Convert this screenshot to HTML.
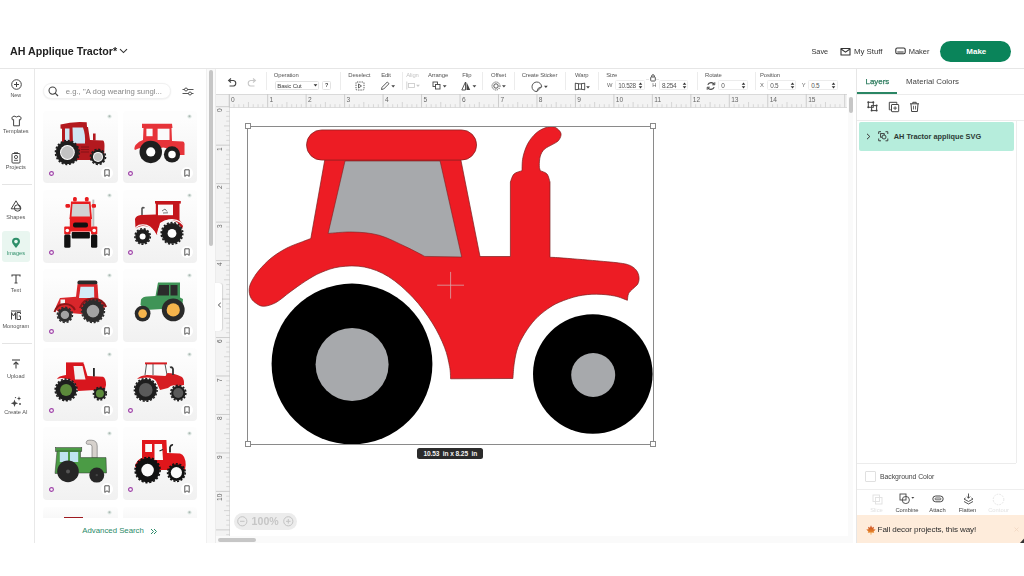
<!DOCTYPE html>
<html><head><meta charset="utf-8">
<style>
*{margin:0;padding:0;box-sizing:border-box}
html,body{width:1024px;height:576px;overflow:hidden;background:#fff;font-family:"Liberation Sans",sans-serif;color:#333}
.a{position:absolute}
.t{position:absolute;white-space:nowrap;line-height:1}
svg{position:absolute;overflow:visible}
</style></head><body><div style="position:absolute;left:0;top:0;width:1024px;height:576px;overflow:hidden;filter:blur(0.3px)">
<div class="t" style="left:10.00px;top:45.64px;font-size:10.7px;color:#222;font-weight:bold;">AH Applique Tractor*</div>
<svg style="left:119.00px;top:48.00px;" width="9" height="6" viewBox="0 0 9 6"><path d="M1 1.2 L4.5 4.6 L8 1.2" fill="none" stroke="#333" stroke-width="1.1"/></svg>
<div class="t" style="left:811.50px;top:48.00px;font-size:7.3px;color:#333;">Save</div>
<svg style="left:840.00px;top:46.50px;" width="11" height="9" viewBox="0 0 11 9"><path d="M1 1.5 H10 V8 H1 Z" fill="none" stroke="#333" stroke-width="1.1" stroke-linejoin="round"/><path d="M1 2 L5.5 5.2 L10 2" fill="none" stroke="#333" stroke-width="1.1"/></svg>
<div class="t" style="left:854.00px;top:47.74px;font-size:7.8px;color:#333;">My Stuff</div>
<svg style="left:894.50px;top:47.00px;" width="11" height="8" viewBox="0 0 11 8"><rect x="0.8" y="1" width="9.4" height="5.8" rx="1.5" fill="none" stroke="#333" stroke-width="1.1"/><path d="M2.3 5 H8.7" stroke="#333" stroke-width="1"/></svg>
<div class="t" style="left:908.70px;top:47.90px;font-size:7.5px;color:#333;">Maker</div>
<div class="a" style="left:940.00px;top:40.50px;width:71.00px;height:21.50px;background:#0a845a;border-radius:11px"></div>
<div class="t" style="left:966.30px;top:48.14px;font-size:8.0px;color:#fff;font-weight:bold;">Make</div>
<div class="a" style="left:0.00px;top:68.00px;width:1024.00px;height:1.00px;background:#e6e6e6;"></div>
<div class="a" style="left:34.00px;top:69.00px;width:1.00px;height:474.00px;background:#e8e8e8;"></div>
<svg style="left:10.50px;top:79.30px;" width="11" height="11" viewBox="0 0 11 11"><circle cx="5.5" cy="5.5" r="4.8" fill="none" stroke="#444" stroke-width="1"/><path d="M5.5 3 V8 M3 5.5 H8" stroke="#444" stroke-width="1"/></svg>
<div class="t" style="left:-34.20px;width:100px;text-align:center;top:92.59px;font-size:5.4px;color:#555;">New</div>
<svg style="left:10.50px;top:114.50px;" width="11" height="12" viewBox="0 0 11 12"><path d="M3 1 Q5.5 3 8 1 L10.2 2.6 L9.6 4.8 L8.4 4.6 V10.8 H2.6 V4.6 L1.4 4.8 L0.8 2.6 Z" fill="none" stroke="#444" stroke-width="1" stroke-linejoin="round"/></svg>
<div class="t" style="left:-34.20px;width:100px;text-align:center;top:129.19px;font-size:5.6px;color:#555;">Templates</div>
<svg style="left:11.00px;top:151.50px;" width="10" height="12" viewBox="0 0 10 12"><rect x="1" y="1.5" width="8" height="9.5" rx="1" fill="none" stroke="#444" stroke-width="1"/><circle cx="5" cy="5" r="1.6" fill="none" stroke="#444" stroke-width="0.9"/><path d="M3 8.3 H7" stroke="#444" stroke-width="0.9"/><path d="M3 0.6 H7" stroke="#444" stroke-width="0.8"/></svg>
<div class="t" style="left:-34.20px;width:100px;text-align:center;top:165.19px;font-size:5.6px;color:#555;">Projects</div>
<div class="a" style="left:2.00px;top:184.30px;width:29.50px;height:1.00px;background:#e4e4e4;"></div>
<svg style="left:10.00px;top:200.30px;" width="12" height="12" viewBox="0 0 12 12"><path d="M6 0.8 L10.8 8.8 H1.2 Z" fill="none" stroke="#444" stroke-width="1" stroke-linejoin="round"/><circle cx="7.6" cy="8" r="3.2" fill="none" stroke="#444" stroke-width="1"/></svg>
<div class="t" style="left:-34.20px;width:100px;text-align:center;top:215.39px;font-size:5.6px;color:#555;">Shapes</div>
<div class="a" style="left:1.70px;top:230.80px;width:28.50px;height:31.20px;background:#e9f6f0;border-radius:3px"></div>
<svg style="left:10.80px;top:236.60px;" width="10" height="12" viewBox="0 0 10 12"><path d="M5 11 C3.5 9 1 6.8 1 4.8 A4 4 0 0 1 9 4.8 C9 6.8 6.5 9 5 11 Z" fill="#2f8f6a"/><circle cx="5" cy="4.6" r="1.8" fill="#e9f6f0"/></svg>
<div class="t" style="left:-34.20px;width:100px;text-align:center;top:251.49px;font-size:5.6px;color:#2f8f6a;">Images</div>
<svg style="left:11.00px;top:273.80px;" width="10" height="10" viewBox="0 0 10 10"><path d="M1 2.4 V1 H9 V2.4 M5 1 V9 M3.5 9 H6.5" fill="none" stroke="#444" stroke-width="1.1"/></svg>
<div class="t" style="left:-34.20px;width:100px;text-align:center;top:288.39px;font-size:5.6px;color:#555;">Text</div>
<svg style="left:10.00px;top:310.20px;" width="12" height="10.5" viewBox="0 0 12 10.5"><path d="M1 1 H11" stroke="#444" stroke-width="1"/><path d="M1.5 9.5 V2.5 L3.5 6 L5.5 2.5 V9.5" fill="none" stroke="#444" stroke-width="1"/><path d="M10.5 4 V2.5 H7 V9.5 H10.5 V6 H8.8" fill="none" stroke="#444" stroke-width="1"/></svg>
<div class="t" style="left:-34.20px;width:100px;text-align:center;top:324.29px;font-size:5.6px;color:#555;">Monogram</div>
<div class="a" style="left:2.00px;top:343.00px;width:29.50px;height:1.00px;background:#e4e4e4;"></div>
<svg style="left:11.00px;top:359.20px;" width="10" height="10" viewBox="0 0 10 10"><path d="M1 1 H9" stroke="#444" stroke-width="1.1"/><path d="M5 9.5 V3.2 M2.6 5.5 L5 3.1 L7.4 5.5" fill="none" stroke="#444" stroke-width="1.1"/></svg>
<div class="t" style="left:-34.20px;width:100px;text-align:center;top:373.69px;font-size:5.6px;color:#555;">Upload</div>
<svg style="left:10.00px;top:396.30px;" width="12" height="11" viewBox="0 0 12 11"><path d="M4.5 3.6 L5.5 6.3 L8.2 7.3 L5.5 8.3 L4.5 11 L3.5 8.3 L0.8 7.3 L3.5 6.3 Z" fill="#444"/><path d="M9 0.3 L9.6 1.9 L11.2 2.5 L9.6 3.1 L9 4.7 L8.4 3.1 L6.8 2.5 L8.4 1.9 Z" fill="#444"/><circle cx="10" cy="8" r="0.9" fill="#444"/><circle cx="5.5" cy="1.6" r="0.7" fill="#444"/></svg>
<div class="t" style="left:-34.20px;width:100px;text-align:center;top:409.99px;font-size:5.6px;color:#555;">Create AI</div>
<div class="a" style="left:43.40px;top:83.00px;width:127.20px;height:16.20px;background:#fff;border:1px solid #f1f1f1;border-radius:8px;box-shadow:0 0.5px 1.5px rgba(0,0,0,0.08)"></div>
<svg style="left:48.30px;top:86.30px;" width="11" height="11" viewBox="0 0 11 11"><circle cx="4.6" cy="4.6" r="3.6" fill="none" stroke="#444" stroke-width="1.1"/><path d="M7.2 7.2 L10 10" stroke="#444" stroke-width="1.2"/></svg>
<div class="t" style="left:65.70px;top:87.87px;font-size:7.75px;color:#888;">e.g., "A dog wearing sungl...</div>
<svg style="left:182.00px;top:86.50px;" width="12" height="9" viewBox="0 0 12 9"><path d="M0.5 2.5 H11.5 M0.5 6.5 H11.5" stroke="#444" stroke-width="0.9"/><circle cx="4" cy="2.5" r="1.5" fill="#fff" stroke="#444" stroke-width="0.9"/><circle cx="8" cy="6.5" r="1.5" fill="#fff" stroke="#444" stroke-width="0.9"/></svg>
<div class="a" style="left:43.40px;top:110.60px;width:74.20px;height:72.80px;background:linear-gradient(#fdfdfd 10%,#f1f1f1);border-radius:4px"></div>
<svg style="left:107.10px;top:114.10px;" width="5" height="5" viewBox="0 0 5 5"><circle cx="2.5" cy="2.5" r="2.1" fill="#dfe8e4"/><circle cx="2.5" cy="2.3" r="1" fill="#aab8b2"/></svg>
<svg style="left:48.70px;top:170.60px;" width="5" height="5" viewBox="0 0 5 5"><circle cx="2.5" cy="2.5" r="1.9" fill="#fbf5fb" stroke="#9c3fa6" stroke-width="1.15"/></svg>
<svg style="left:101.10px;top:166.60px;" width="12" height="12" viewBox="0 0 12 12"><circle cx="6" cy="6" r="6" fill="#fff"/><path d="M3.8 2.8 H8.2 V9.4 L6 7.8 L3.8 9.4 Z" fill="none" stroke="#444" stroke-width="0.9" stroke-linejoin="round"/></svg>
<div class="a" style="left:122.80px;top:110.60px;width:74.20px;height:72.80px;background:linear-gradient(#fdfdfd 10%,#f1f1f1);border-radius:4px"></div>
<svg style="left:186.50px;top:114.10px;" width="5" height="5" viewBox="0 0 5 5"><circle cx="2.5" cy="2.5" r="2.1" fill="#dfe8e4"/><circle cx="2.5" cy="2.3" r="1" fill="#aab8b2"/></svg>
<svg style="left:128.10px;top:170.60px;" width="5" height="5" viewBox="0 0 5 5"><circle cx="2.5" cy="2.5" r="1.9" fill="#fbf5fb" stroke="#9c3fa6" stroke-width="1.15"/></svg>
<svg style="left:180.50px;top:166.60px;" width="12" height="12" viewBox="0 0 12 12"><circle cx="6" cy="6" r="6" fill="#fff"/><path d="M3.8 2.8 H8.2 V9.4 L6 7.8 L3.8 9.4 Z" fill="none" stroke="#444" stroke-width="0.9" stroke-linejoin="round"/></svg>
<div class="a" style="left:43.40px;top:189.80px;width:74.20px;height:72.80px;background:linear-gradient(#fdfdfd 10%,#f1f1f1);border-radius:4px"></div>
<svg style="left:107.10px;top:193.30px;" width="5" height="5" viewBox="0 0 5 5"><circle cx="2.5" cy="2.5" r="2.1" fill="#dfe8e4"/><circle cx="2.5" cy="2.3" r="1" fill="#aab8b2"/></svg>
<svg style="left:48.70px;top:249.80px;" width="5" height="5" viewBox="0 0 5 5"><circle cx="2.5" cy="2.5" r="1.9" fill="#fbf5fb" stroke="#9c3fa6" stroke-width="1.15"/></svg>
<svg style="left:101.10px;top:245.80px;" width="12" height="12" viewBox="0 0 12 12"><circle cx="6" cy="6" r="6" fill="#fff"/><path d="M3.8 2.8 H8.2 V9.4 L6 7.8 L3.8 9.4 Z" fill="none" stroke="#444" stroke-width="0.9" stroke-linejoin="round"/></svg>
<div class="a" style="left:122.80px;top:189.80px;width:74.20px;height:72.80px;background:linear-gradient(#fdfdfd 10%,#f1f1f1);border-radius:4px"></div>
<svg style="left:186.50px;top:193.30px;" width="5" height="5" viewBox="0 0 5 5"><circle cx="2.5" cy="2.5" r="2.1" fill="#dfe8e4"/><circle cx="2.5" cy="2.3" r="1" fill="#aab8b2"/></svg>
<svg style="left:128.10px;top:249.80px;" width="5" height="5" viewBox="0 0 5 5"><circle cx="2.5" cy="2.5" r="1.9" fill="#fbf5fb" stroke="#9c3fa6" stroke-width="1.15"/></svg>
<svg style="left:180.50px;top:245.80px;" width="12" height="12" viewBox="0 0 12 12"><circle cx="6" cy="6" r="6" fill="#fff"/><path d="M3.8 2.8 H8.2 V9.4 L6 7.8 L3.8 9.4 Z" fill="none" stroke="#444" stroke-width="0.9" stroke-linejoin="round"/></svg>
<div class="a" style="left:43.40px;top:269.00px;width:74.20px;height:72.80px;background:linear-gradient(#fdfdfd 10%,#f1f1f1);border-radius:4px"></div>
<svg style="left:107.10px;top:272.50px;" width="5" height="5" viewBox="0 0 5 5"><circle cx="2.5" cy="2.5" r="2.1" fill="#dfe8e4"/><circle cx="2.5" cy="2.3" r="1" fill="#aab8b2"/></svg>
<svg style="left:48.70px;top:329.00px;" width="5" height="5" viewBox="0 0 5 5"><circle cx="2.5" cy="2.5" r="1.9" fill="#fbf5fb" stroke="#9c3fa6" stroke-width="1.15"/></svg>
<svg style="left:101.10px;top:325.00px;" width="12" height="12" viewBox="0 0 12 12"><circle cx="6" cy="6" r="6" fill="#fff"/><path d="M3.8 2.8 H8.2 V9.4 L6 7.8 L3.8 9.4 Z" fill="none" stroke="#444" stroke-width="0.9" stroke-linejoin="round"/></svg>
<div class="a" style="left:122.80px;top:269.00px;width:74.20px;height:72.80px;background:linear-gradient(#fdfdfd 10%,#f1f1f1);border-radius:4px"></div>
<svg style="left:186.50px;top:272.50px;" width="5" height="5" viewBox="0 0 5 5"><circle cx="2.5" cy="2.5" r="2.1" fill="#dfe8e4"/><circle cx="2.5" cy="2.3" r="1" fill="#aab8b2"/></svg>
<svg style="left:180.50px;top:325.00px;" width="12" height="12" viewBox="0 0 12 12"><circle cx="6" cy="6" r="6" fill="#fff"/><path d="M3.8 2.8 H8.2 V9.4 L6 7.8 L3.8 9.4 Z" fill="none" stroke="#444" stroke-width="0.9" stroke-linejoin="round"/></svg>
<div class="a" style="left:43.40px;top:348.20px;width:74.20px;height:72.80px;background:linear-gradient(#fdfdfd 10%,#f1f1f1);border-radius:4px"></div>
<svg style="left:107.10px;top:351.70px;" width="5" height="5" viewBox="0 0 5 5"><circle cx="2.5" cy="2.5" r="2.1" fill="#dfe8e4"/><circle cx="2.5" cy="2.3" r="1" fill="#aab8b2"/></svg>
<svg style="left:48.70px;top:408.20px;" width="5" height="5" viewBox="0 0 5 5"><circle cx="2.5" cy="2.5" r="1.9" fill="#fbf5fb" stroke="#9c3fa6" stroke-width="1.15"/></svg>
<svg style="left:101.10px;top:404.20px;" width="12" height="12" viewBox="0 0 12 12"><circle cx="6" cy="6" r="6" fill="#fff"/><path d="M3.8 2.8 H8.2 V9.4 L6 7.8 L3.8 9.4 Z" fill="none" stroke="#444" stroke-width="0.9" stroke-linejoin="round"/></svg>
<div class="a" style="left:122.80px;top:348.20px;width:74.20px;height:72.80px;background:linear-gradient(#fdfdfd 10%,#f1f1f1);border-radius:4px"></div>
<svg style="left:186.50px;top:351.70px;" width="5" height="5" viewBox="0 0 5 5"><circle cx="2.5" cy="2.5" r="2.1" fill="#dfe8e4"/><circle cx="2.5" cy="2.3" r="1" fill="#aab8b2"/></svg>
<svg style="left:128.10px;top:408.20px;" width="5" height="5" viewBox="0 0 5 5"><circle cx="2.5" cy="2.5" r="1.9" fill="#fbf5fb" stroke="#9c3fa6" stroke-width="1.15"/></svg>
<svg style="left:180.50px;top:404.20px;" width="12" height="12" viewBox="0 0 12 12"><circle cx="6" cy="6" r="6" fill="#fff"/><path d="M3.8 2.8 H8.2 V9.4 L6 7.8 L3.8 9.4 Z" fill="none" stroke="#444" stroke-width="0.9" stroke-linejoin="round"/></svg>
<div class="a" style="left:43.40px;top:427.40px;width:74.20px;height:72.80px;background:linear-gradient(#fdfdfd 10%,#f1f1f1);border-radius:4px"></div>
<svg style="left:107.10px;top:430.90px;" width="5" height="5" viewBox="0 0 5 5"><circle cx="2.5" cy="2.5" r="2.1" fill="#dfe8e4"/><circle cx="2.5" cy="2.3" r="1" fill="#aab8b2"/></svg>
<svg style="left:48.70px;top:487.40px;" width="5" height="5" viewBox="0 0 5 5"><circle cx="2.5" cy="2.5" r="1.9" fill="#fbf5fb" stroke="#9c3fa6" stroke-width="1.15"/></svg>
<svg style="left:101.10px;top:483.40px;" width="12" height="12" viewBox="0 0 12 12"><circle cx="6" cy="6" r="6" fill="#fff"/><path d="M3.8 2.8 H8.2 V9.4 L6 7.8 L3.8 9.4 Z" fill="none" stroke="#444" stroke-width="0.9" stroke-linejoin="round"/></svg>
<div class="a" style="left:122.80px;top:427.40px;width:74.20px;height:72.80px;background:linear-gradient(#fdfdfd 10%,#f1f1f1);border-radius:4px"></div>
<svg style="left:186.50px;top:430.90px;" width="5" height="5" viewBox="0 0 5 5"><circle cx="2.5" cy="2.5" r="2.1" fill="#dfe8e4"/><circle cx="2.5" cy="2.3" r="1" fill="#aab8b2"/></svg>
<svg style="left:128.10px;top:487.40px;" width="5" height="5" viewBox="0 0 5 5"><circle cx="2.5" cy="2.5" r="1.9" fill="#fbf5fb" stroke="#9c3fa6" stroke-width="1.15"/></svg>
<svg style="left:180.50px;top:483.40px;" width="12" height="12" viewBox="0 0 12 12"><circle cx="6" cy="6" r="6" fill="#fff"/><path d="M3.8 2.8 H8.2 V9.4 L6 7.8 L3.8 9.4 Z" fill="none" stroke="#444" stroke-width="0.9" stroke-linejoin="round"/></svg>
<div class="a" style="left:43.40px;top:506.60px;width:74.20px;height:11.90px;background:linear-gradient(#fdfdfd,#f8f8f8);border-radius:4px 4px 0 0"></div>
<svg style="left:107.10px;top:510.10px;" width="5" height="5" viewBox="0 0 5 5"><circle cx="2.5" cy="2.5" r="2.1" fill="#dfe8e4"/><circle cx="2.5" cy="2.3" r="1" fill="#aab8b2"/></svg>
<div class="a" style="left:122.80px;top:506.60px;width:74.20px;height:11.90px;background:linear-gradient(#fdfdfd,#f8f8f8);border-radius:4px 4px 0 0"></div>
<svg style="left:186.50px;top:510.10px;" width="5" height="5" viewBox="0 0 5 5"><circle cx="2.5" cy="2.5" r="2.1" fill="#dfe8e4"/><circle cx="2.5" cy="2.3" r="1" fill="#aab8b2"/></svg>
<svg style="left:43.00px;top:110.00px;" width="80" height="72" viewBox="0 0 80 72"><path d="M17.5 14.4 Q30 11 43.7 12.2 L44 17 L43 18.5 L20 19 L17.5 18.5 Z" fill="#b3191f"/><path d="M19 17 H45 L47 30 L60 30.5 Q61.5 31 61.5 36 L61 50 H26 V35 L19 35 Z" fill="#b3191f"/><path d="M22 18.5 H26.5 V31 H22 Z" fill="#cfe5f3"/><path d="M29.5 17.5 H40 Q42.5 24 42 33.5 H30 Z" fill="#cfe5f3"/><rect x="50" y="23.5" width="2.6" height="7" fill="#b3191f"/><path d="M38 37 H46 M38 39.5 H46 M38 42 H46" stroke="#7a1014" stroke-width="0.8"/><circle cx="24.4" cy="42.5" r="11.9" fill="none" stroke="#1e1e1e" stroke-width="1.6" stroke-dasharray="2.06 1.68"/><circle cx="24.4" cy="42.5" r="11.5" fill="#1e1e1e"/><circle cx="24.4" cy="42.5" r="7.4" fill="#fff"/><circle cx="24.4" cy="42.5" r="6.4" fill="#c2c2c2"/><circle cx="55" cy="46.9" r="7.5" fill="none" stroke="#1e1e1e" stroke-width="1.6" stroke-dasharray="2.16 1.77"/><circle cx="55" cy="46.9" r="7.1" fill="#1e1e1e"/><circle cx="55" cy="46.9" r="5" fill="#fff"/><circle cx="55" cy="46.9" r="4" fill="#c2c2c2"/></svg>
<svg style="left:122.00px;top:110.00px;" width="80" height="72" viewBox="0 0 80 72"><path d="M20 13.8 H50 L50.5 18 H49.5 L50 31 L61 31.5 Q63 32 62.5 36 V45 H52 Q43 33 35 40 H25 Q20 36 13 40 Q11.5 39 13.5 35 Q17 31 21 30 L21.5 18 H20 Z" fill="#e63339"/><rect x="24.4" y="18.7" width="6.2" height="7.5" fill="#fafafa"/><path d="M35.6 18.7 H47.5 V30 H35.6 Z" fill="#fafafa"/><circle cx="28.75" cy="41.9" r="11.25" fill="#1e1e1e"/><circle cx="28.75" cy="41.9" r="4.6" fill="#fff"/><circle cx="50" cy="44.4" r="8.1" fill="#1e1e1e"/><circle cx="50" cy="44.4" r="3.75" fill="#fff"/></svg>
<svg style="left:43.00px;top:189.20px;" width="80" height="72" viewBox="0 0 80 72"><rect x="49.4" y="10.6" width="1.9" height="27" fill="#bdbdbd"/><rect x="30" y="8" width="3.8" height="4.5" rx="1.5" fill="#e81c1f"/><rect x="41.9" y="8" width="3.8" height="4.5" rx="1.5" fill="#e81c1f"/><rect x="22.5" y="15" width="4.5" height="3.7" rx="1.2" fill="#e81c1f"/><rect x="48.7" y="15" width="4.3" height="3.7" rx="1.2" fill="#e81c1f"/><path d="M28 12.5 H47.5 L49 30 H26.5 Z" fill="#e81c1f"/><path d="M29.5 15 H46 L47 27.5 H28.5 Z" fill="#d2d2d2"/><rect x="26.8" y="28.5" width="21.5" height="14" fill="#e81c1f"/><rect x="30" y="33.5" width="15" height="5" rx="2" fill="#111"/><rect x="21.2" y="37.5" width="6.3" height="8" rx="1" fill="#e81c1f"/><rect x="48" y="37.5" width="6.3" height="8" rx="1" fill="#e81c1f"/><circle cx="24.3" cy="41.5" r="1.8" fill="#fff"/><circle cx="51.2" cy="41.5" r="1.8" fill="#fff"/><rect x="28.7" y="43" width="18.2" height="6.5" rx="1" fill="#111"/><rect x="21.2" y="45.6" width="6.3" height="13.2" rx="1.5" fill="#111"/><rect x="48" y="45.6" width="6.3" height="13.2" rx="1.5" fill="#111"/></svg>
<svg style="left:122.00px;top:189.20px;" width="80" height="72" viewBox="0 0 80 72"><rect x="33" y="12" width="25.8" height="2.6" fill="#c4161c"/><path d="M33.8 14 H57.5 V31 L61.5 36 L60 40 L55 33 Q46 28 38 34 L35 46 Q30 36 20 37 Q15 38 13.5 40 L13 30 Q14 26.5 19 26 L33.8 25.5 Z" fill="#c4161c"/><path d="M36 15.6 H51 V26.2 H36 Z" fill="#fafafa"/><path d="M40 22 L43 20 L45 22.5 M41 24 L46 23.8" stroke="#555" stroke-width="0.8" fill="none"/><path d="M20 26 V19.5 Q20.5 18 22.5 19" stroke="#555" stroke-width="1.6" fill="none"/><path d="M10.5 45 Q13 35.5 21 35.8 Q29 36 32.5 44" stroke="#f7f7f7" stroke-width="1.2" fill="none"/><path d="M35.5 45 Q38 31 50 30.6 Q60 31 63.5 40" stroke="#f7f7f7" stroke-width="1.2" fill="none"/><circle cx="20.6" cy="47.5" r="7.700000000000001" fill="none" stroke="#1e1e1e" stroke-width="1.6" stroke-dasharray="2.05 1.67"/><circle cx="20.6" cy="47.5" r="7.300000000000001" fill="#1e1e1e"/><circle cx="20.6" cy="47.5" r="3" fill="#fff"/><circle cx="50" cy="44.4" r="10.8" fill="none" stroke="#1e1e1e" stroke-width="1.6" stroke-dasharray="2.07 1.70"/><circle cx="50" cy="44.4" r="10.4" fill="#1e1e1e"/><circle cx="50" cy="44.4" r="4.4" fill="#fff"/></svg>
<svg style="left:43.00px;top:268.40px;" width="80" height="72" viewBox="0 0 80 72"><rect x="34.4" y="12.5" width="20" height="4.4" rx="2" fill="#2a2a2a"/><path d="M34.5 16.2 H54.5 L55.5 32 L62 36 L61 42 L38 46 L16 44 Q12 42 13 38.5 L17 30 L33 28.8 Z" fill="#d9262b"/><path d="M37.5 18.8 H51 L51.3 30 H36 Z" fill="#d3ebf7"/><path d="M17.5 31.5 H22 V36.5 H17.5 Z" fill="#f4f4f4"/><path d="M11.5 44 Q14 36 22 36 Q29 36 32 42" stroke="#8e1518" stroke-width="2" fill="none"/><path d="M37 40 Q40 31 50 30.5 Q60 31 63 39" stroke="#8e1518" stroke-width="2.2" fill="none"/><circle cx="50" cy="43.1" r="11.4" fill="none" stroke="#2d2d2d" stroke-width="1.6" stroke-dasharray="2.07 1.70"/><circle cx="50" cy="43.1" r="11" fill="#2d2d2d"/><circle cx="50" cy="43.1" r="6.3" fill="#a3a3a3"/><circle cx="21.9" cy="46.9" r="7.5" fill="none" stroke="#2d2d2d" stroke-width="1.6" stroke-dasharray="2.16 1.77"/><circle cx="21.9" cy="46.9" r="7.1" fill="#2d2d2d"/><circle cx="21.9" cy="46.9" r="4.2" fill="#a3a3a3"/></svg>
<svg style="left:122.00px;top:268.40px;" width="80" height="72" viewBox="0 0 80 72"><path d="M36 14.4 H58 V29.5 L61 31 L60 41 H40 L24 42 L18.5 37 L19 31.5 Q21 28.5 25 28.4 L33.5 28 Z" fill="#3f9457"/><path d="M37 17 H47 V27.5 H35 Z" fill="#2b2b2b"/><path d="M48.5 17 H55.5 V27.5 H48.5 Z" fill="#2b2b2b"/><circle cx="51.25" cy="41.9" r="11.4" fill="#2a2a2a"/><circle cx="51.25" cy="41.9" r="6.6" fill="#f6b44c"/><circle cx="20.6" cy="45.6" r="7.9" fill="#2a2a2a"/><circle cx="20.6" cy="45.6" r="4.3" fill="#f6b44c"/></svg>
<svg style="left:43.00px;top:347.60px;" width="80" height="72" viewBox="0 0 80 72"><rect x="23" y="14.4" width="17.6" height="2.6" fill="#d8161e"/><path d="M23 16 H41 L44.5 28 L60 28.8 Q63 30 63 37 L62 41 L52 42 L35 43 L32 36 Q27 30 18 30 L14 31 Q15 28 23 27 Z" fill="#d8161e"/><path d="M30.5 18 H39.5 L42.5 31.5 H32 Z" fill="#f2f2f2"/><rect x="50" y="20" width="1.8" height="8.5" fill="#222"/><circle cx="23.1" cy="41.9" r="10.9" fill="none" stroke="#1e1e1e" stroke-width="1.6" stroke-dasharray="2.09 1.71"/><circle cx="23.1" cy="41.9" r="10.5" fill="#1e1e1e"/><circle cx="23.1" cy="41.9" r="6" fill="#5c8a3b"/><circle cx="56.9" cy="45.6" r="6.4" fill="none" stroke="#1e1e1e" stroke-width="1.6" stroke-dasharray="2.01 1.65"/><circle cx="56.9" cy="45.6" r="6" fill="#1e1e1e"/><circle cx="56.9" cy="45.6" r="4" fill="#5c8a3b"/></svg>
<svg style="left:122.00px;top:347.60px;" width="80" height="72" viewBox="0 0 80 72"><rect x="23" y="14.4" width="22" height="2" fill="#d61d22"/><path d="M24.5 16 L23 27 M31 16 V27 M43 16 L45 27" stroke="#444" stroke-width="0.9"/><path d="M15 31 Q18 27.5 25 27 L43.5 28 L45.5 25 Q52 25 60 29 Q62.5 31.5 62 37 L55 38 Q50 36 46 40 L38 42 L34 33 Q30 28 20 30 Z" fill="#d61d22"/><path d="M48 19.5 Q50 18.5 51 21 V27" stroke="#333" stroke-width="1.8" fill="none"/><circle cx="23.75" cy="41.9" r="11.3" fill="none" stroke="#1e1e1e" stroke-width="1.6" stroke-dasharray="2.06 1.68"/><circle cx="23.75" cy="41.9" r="10.9" fill="#1e1e1e"/><circle cx="23.75" cy="41.9" r="6.8" fill="#5a5a5a"/><circle cx="56.25" cy="45" r="7.6" fill="none" stroke="#1e1e1e" stroke-width="1.6" stroke-dasharray="2.02 1.65"/><circle cx="56.25" cy="45" r="7.199999999999999" fill="#1e1e1e"/><circle cx="56.25" cy="45" r="5" fill="#5a5a5a"/></svg>
<svg style="left:43.00px;top:426.80px;" width="80" height="72" viewBox="0 0 80 72"><path d="M49 31 V19.5 Q49 17.3 46.5 17.3 H44.5 Q43 17.3 43.2 15.3 Q43.5 13.2 46 13.2 H48.5 Q54 13.3 54.2 19 V31 Z" fill="#d6d1cc" stroke="#666" stroke-width="0.6"/><rect x="12.5" y="20.6" width="26.3" height="3.8" fill="#4b9b45" stroke="#333" stroke-width="0.5"/><path d="M14 24 H37.5 V30.6 H63 L63.5 46 H36 L12 46.5 Z" fill="#4b9b45" stroke="#333" stroke-width="0.5"/><rect x="16.8" y="25" width="8.2" height="10" fill="#bfe3f2"/><rect x="27" y="25" width="8.2" height="10" fill="#bfe3f2"/><circle cx="25" cy="44.4" r="10.8" fill="#262626"/><circle cx="25" cy="44.4" r="2" fill="#555"/><circle cx="53.75" cy="48.1" r="7.5" fill="#262626"/><circle cx="53.75" cy="48.1" r="1.2" fill="#444"/></svg>
<svg style="left:122.00px;top:426.80px;" width="80" height="72" viewBox="0 0 80 72"><path d="M20 13 H44.4 L45 26 L58 26.5 Q63.5 28 63.7 38 L63 43 H40 L30 44 L13 40 Q14 33 20 31 Z" fill="#e0161b"/><rect x="23.2" y="17" width="6.8" height="8" fill="#fafafa"/><path d="M32.5 17 H40 L41 33 H32.5 Z" fill="#fafafa"/><path d="M48 20 V25.5 M48 20 Q49 17.5 51 18" stroke="#222" stroke-width="1.8" fill="none"/><path d="M37.5 24 L41 22.5" stroke="#222" stroke-width="1.2"/><circle cx="25.6" cy="43.1" r="12.5" fill="none" stroke="#111" stroke-width="1.6" stroke-dasharray="2.16 1.77"/><circle cx="25.6" cy="43.1" r="12.1" fill="#111"/><circle cx="25.6" cy="43.1" r="6.3" fill="#fafafa"/><circle cx="54.4" cy="45.6" r="8.8" fill="none" stroke="#111" stroke-width="1.6" stroke-dasharray="2.03 1.66"/><circle cx="54.4" cy="45.6" r="8.4" fill="#111"/><circle cx="54.4" cy="45.6" r="5.6" fill="#fafafa"/></svg>
<div class="a" style="left:63.60px;top:516.80px;width:19.40px;height:1.60px;background:#9e1a20;"></div>
<div class="a" style="left:35.00px;top:518.50px;width:171.00px;height:24.50px;background:#fff;"></div>
<div class="t" style="left:82.30px;top:526.84px;font-size:7.8px;color:#2a8a68;">Advanced Search</div>
<svg style="left:149.50px;top:527.50px;" width="7" height="7" viewBox="0 0 7 7"><path d="M1 1 L3.5 3.5 L1 6 M4 1 L6.5 3.5 L4 6" fill="none" stroke="#2a8a68" stroke-width="1"/></svg>
<div class="a" style="left:205.80px;top:69.00px;width:1.00px;height:474.00px;background:#f0f0f0;"></div>
<div class="a" style="left:207.00px;top:69.00px;width:9.00px;height:474.00px;background:#fafafa;"></div>
<div class="a" style="left:209.00px;top:70.00px;width:4.00px;height:176.00px;background:#c6c6c6;border-radius:2px"></div>
<svg style="left:225.50px;top:77.00px;" width="12" height="10" viewBox="0 0 12 10"><path d="M3.2 3.5 H7.5 A2.8 2.8 0 0 1 7.5 9 H3.5" fill="none" stroke="#444" stroke-width="1.1"/><path d="M5 1.5 L2.6 3.5 L5 5.5" fill="none" stroke="#444" stroke-width="1.1"/></svg>
<svg style="left:245.50px;top:77.00px;" width="12" height="10" viewBox="0 0 12 10"><path d="M8.8 3.5 H4.5 A2.8 2.8 0 0 0 4.5 9 H8.5" fill="none" stroke="#c8c8c8" stroke-width="1.1"/><path d="M7 1.5 L9.4 3.5 L7 5.5" fill="none" stroke="#c8c8c8" stroke-width="1.1"/></svg>
<div class="a" style="left:265.60px;top:72.00px;width:1.00px;height:18.00px;background:#ececec;"></div>
<div class="t" style="left:273.80px;top:73.13px;font-size:5.9px;color:#555;letter-spacing:-0.12px">Operation</div>
<div class="a" style="left:274.50px;top:80.70px;width:44.20px;height:9.20px;background:#fff;border:1px solid #e2e2e2;border-radius:1.5px"></div>
<div class="t" style="left:277.30px;top:82.73px;font-size:6.1px;color:#444;letter-spacing:-0.2px">Basic Cut</div>
<svg style="left:313.00px;top:83.50px;" width="5" height="4" viewBox="0 0 5 4"><path d="M0.60 0.20 H4.40 L2.50 2.50 Z" fill="#333"/></svg>
<div class="a" style="left:322.00px;top:80.70px;width:9.20px;height:9.20px;background:#fff;border:1px solid #e2e2e2;border-radius:1.5px"></div>
<div class="t" style="left:276.60px;width:100px;text-align:center;top:82.64px;font-size:5.5px;color:#444;font-weight:bold;">?</div>
<div class="a" style="left:339.70px;top:72.00px;width:1.00px;height:18.00px;background:#ececec;"></div>
<div class="t" style="left:309.30px;width:100px;text-align:center;top:73.13px;font-size:5.9px;color:#555;letter-spacing:-0.12px">Deselect</div>
<svg style="left:354.50px;top:81.00px;" width="10" height="10" viewBox="0 0 10 10"><rect x="1" y="1" width="8" height="8" rx="1" fill="none" stroke="#444" stroke-width="0.9" stroke-dasharray="1.3 1"/><path d="M3.5 3 V7 M3.5 3 L6.5 5 L3.5 7" fill="none" stroke="#444" stroke-width="0.8"/></svg>
<div class="t" style="left:336.00px;width:100px;text-align:center;top:73.13px;font-size:5.9px;color:#555;letter-spacing:-0.12px">Edit</div>
<svg style="left:379.50px;top:81.20px;" width="16" height="10" viewBox="0 0 16 10"><path d="M1.5 8.5 L2 6.3 L7.3 1 L9 2.7 L3.7 8 Z" fill="none" stroke="#444" stroke-width="0.9" stroke-linejoin="round"/><path d="M11.30 4.20 H15.10 L13.20 6.50 Z" fill="#444"/></svg>
<div class="a" style="left:401.70px;top:72.00px;width:1.00px;height:18.00px;background:#ececec;"></div>
<div class="t" style="left:362.50px;width:100px;text-align:center;top:73.13px;font-size:5.9px;color:#c4c4c4;letter-spacing:-0.12px">Align</div>
<svg style="left:406.00px;top:81.00px;" width="14" height="9" viewBox="0 0 14 9"><path d="M0.8 0.5 V8.5" stroke="#c8c8c8" stroke-width="0.8"/><rect x="2.5" y="2.5" width="6" height="4" fill="none" stroke="#c8c8c8" stroke-width="0.8"/><path d="M10.10 3.70 H13.90 L12.00 6.00 Z" fill="#c8c8c8"/></svg>
<div class="t" style="left:388.00px;width:100px;text-align:center;top:73.13px;font-size:5.9px;color:#555;letter-spacing:-0.12px">Arrange</div>
<svg style="left:431.50px;top:81.20px;" width="16" height="10" viewBox="0 0 16 10"><rect x="1" y="1" width="4.5" height="4.5" fill="none" stroke="#444" stroke-width="0.9"/><rect x="3.5" y="3.5" width="4.5" height="4.5" fill="#fff" stroke="#444" stroke-width="0.9"/><path d="M10.80 4.20 H14.60 L12.70 6.50 Z" fill="#444"/></svg>
<div class="t" style="left:416.80px;width:100px;text-align:center;top:73.13px;font-size:5.9px;color:#555;letter-spacing:-0.12px">Flip</div>
<svg style="left:460.50px;top:81.20px;" width="16" height="10" viewBox="0 0 16 10"><path d="M4.5 1 L0.8 9 H4.5 Z" fill="none" stroke="#444" stroke-width="0.9" stroke-linejoin="round"/><path d="M5.5 1 L9.2 9 H5.5 Z" fill="#444"/><path d="M11.50 4.20 H15.30 L13.40 6.50 Z" fill="#444"/></svg>
<div class="a" style="left:482.40px;top:72.00px;width:1.00px;height:18.00px;background:#ececec;"></div>
<div class="t" style="left:448.50px;width:100px;text-align:center;top:73.13px;font-size:5.9px;color:#555;letter-spacing:-0.12px">Offset</div>
<svg style="left:490.50px;top:81.20px;" width="16" height="10" viewBox="0 0 16 10"><circle cx="5" cy="5" r="2.2" fill="none" stroke="#444" stroke-width="0.9"/><circle cx="5" cy="5" r="4" fill="none" stroke="#444" stroke-width="0.9" stroke-dasharray="1.2 0.9"/><path d="M11.00 4.20 H14.80 L12.90 6.50 Z" fill="#444"/></svg>
<div class="a" style="left:513.60px;top:72.00px;width:1.00px;height:18.00px;background:#ececec;"></div>
<div class="t" style="left:489.50px;width:100px;text-align:center;top:73.13px;font-size:5.9px;color:#555;letter-spacing:-0.12px">Create Sticker</div>
<svg style="left:531.00px;top:81.30px;" width="18" height="11" viewBox="0 0 18 11"><path d="M10.6 5.8 A4.8 4.8 0 1 0 5.8 10.6 Z" fill="none" stroke="#444" stroke-width="0.9" stroke-linejoin="round"/><path d="M5.8 10.6 Q6.3 6.3 10.6 5.8" fill="none" stroke="#444" stroke-width="0.9"/><path d="M13.00 4.70 H16.80 L14.90 7.00 Z" fill="#444"/></svg>
<div class="a" style="left:565.00px;top:72.00px;width:1.00px;height:18.00px;background:#ececec;"></div>
<div class="t" style="left:531.80px;width:100px;text-align:center;top:73.13px;font-size:5.9px;color:#555;letter-spacing:-0.12px">Warp</div>
<svg style="left:573.50px;top:82.30px;" width="16" height="9" viewBox="0 0 16 9"><path d="M1 1.2 Q6 2.6 11 1.2 M1 7.8 Q6 6.4 11 7.8" fill="none" stroke="#444" stroke-width="0.9"/><path d="M1.3 1.2 V7.8 M4.5 1.8 V7.2 M7.5 1.8 V7.2 M10.7 1.2 V7.8" stroke="#444" stroke-width="0.9"/><path d="M12.10 4.20 H15.90 L14.00 6.50 Z" fill="#444"/></svg>
<div class="a" style="left:598.40px;top:72.00px;width:1.00px;height:18.00px;background:#ececec;"></div>
<div class="t" style="left:606.30px;top:73.13px;font-size:5.9px;color:#555;letter-spacing:-0.12px">Size</div>
<div class="t" style="left:607.00px;top:82.58px;font-size:5.8px;color:#666;">W</div>
<div class="a" style="left:615.00px;top:80.40px;width:29.50px;height:9.40px;background:#fff;border:1px solid #ececec;border-radius:1.5px"></div>
<div class="t" style="left:618.30px;top:82.77px;font-size:6.4px;color:#555;letter-spacing:-0.35px">10.528</div>
<svg style="left:638.20px;top:81.80px;" width="5" height="7" viewBox="0 0 5 7"><path d="M2.5 0.6 L4.3 2.8 H0.7 Z M2.5 6.4 L4.3 4.2 H0.7 Z" fill="#333"/></svg>
<svg style="left:649.50px;top:73.50px;" width="6" height="7.5" viewBox="0 0 6 7.5"><rect x="0.7" y="3" width="4.6" height="4" rx="0.6" fill="none" stroke="#444" stroke-width="0.9"/><path d="M1.7 3 V2 A1.3 1.3 0 0 1 4.3 2 V3" fill="none" stroke="#444" stroke-width="0.9"/></svg>
<div class="a" style="left:646.00px;top:78.50px;width:3.00px;height:0.80px;background:#e4e4e4;"></div>
<div class="a" style="left:656.00px;top:78.50px;width:3.00px;height:0.80px;background:#e4e4e4;"></div>
<div class="t" style="left:652.20px;top:82.58px;font-size:5.8px;color:#666;">H</div>
<div class="a" style="left:658.60px;top:80.40px;width:29.50px;height:9.40px;background:#fff;border:1px solid #ececec;border-radius:1.5px"></div>
<div class="t" style="left:661.90px;top:82.77px;font-size:6.4px;color:#555;letter-spacing:-0.35px">8.254</div>
<svg style="left:681.80px;top:81.80px;" width="5" height="7" viewBox="0 0 5 7"><path d="M2.5 0.6 L4.3 2.8 H0.7 Z M2.5 6.4 L4.3 4.2 H0.7 Z" fill="#333"/></svg>
<div class="a" style="left:696.90px;top:72.00px;width:1.00px;height:18.00px;background:#ececec;"></div>
<div class="t" style="left:705.00px;top:73.13px;font-size:5.9px;color:#555;letter-spacing:-0.12px">Rotate</div>
<svg style="left:705.50px;top:80.60px;" width="10" height="10" viewBox="0 0 10 10"><path d="M8.3 3.6 A3.6 3.6 0 0 0 1.8 3.8 M1.7 6.4 A3.6 3.6 0 0 0 8.2 6.2" fill="none" stroke="#444" stroke-width="1.1"/><path d="M8.8 1.2 V3.8 H6.2 M1.2 8.8 V6.2 H3.8" fill="none" stroke="#444" stroke-width="0.9"/></svg>
<div class="a" style="left:718.00px;top:80.40px;width:29.60px;height:9.40px;background:#fff;border:1px solid #ececec;border-radius:1.5px"></div>
<div class="t" style="left:721.30px;top:82.77px;font-size:6.4px;color:#555;letter-spacing:-0.35px">0</div>
<svg style="left:741.30px;top:81.80px;" width="5" height="7" viewBox="0 0 5 7"><path d="M2.5 0.6 L4.3 2.8 H0.7 Z M2.5 6.4 L4.3 4.2 H0.7 Z" fill="#333"/></svg>
<div class="a" style="left:755.30px;top:72.00px;width:1.00px;height:18.00px;background:#ececec;"></div>
<div class="t" style="left:760.00px;top:73.13px;font-size:5.9px;color:#555;letter-spacing:-0.12px">Position</div>
<div class="t" style="left:760.00px;top:82.58px;font-size:5.8px;color:#666;">X</div>
<div class="a" style="left:767.00px;top:80.40px;width:29.00px;height:9.40px;background:#fff;border:1px solid #ececec;border-radius:1.5px"></div>
<div class="t" style="left:770.30px;top:82.77px;font-size:6.4px;color:#555;letter-spacing:-0.35px">0.5</div>
<svg style="left:789.70px;top:81.80px;" width="5" height="7" viewBox="0 0 5 7"><path d="M2.5 0.6 L4.3 2.8 H0.7 Z M2.5 6.4 L4.3 4.2 H0.7 Z" fill="#333"/></svg>
<div class="t" style="left:801.80px;top:82.58px;font-size:5.8px;color:#666;">Y</div>
<div class="a" style="left:808.00px;top:80.40px;width:29.60px;height:9.40px;background:#fff;border:1px solid #ececec;border-radius:1.5px"></div>
<div class="t" style="left:811.30px;top:82.77px;font-size:6.4px;color:#555;letter-spacing:-0.35px">0.5</div>
<svg style="left:831.30px;top:81.80px;" width="5" height="7" viewBox="0 0 5 7"><path d="M2.5 0.6 L4.3 2.8 H0.7 Z M2.5 6.4 L4.3 4.2 H0.7 Z" fill="#333"/></svg>
<div class="a" style="left:215.00px;top:69.00px;width:1.00px;height:474.00px;background:#ececec;"></div>
<div class="a" style="left:216.00px;top:94.30px;width:631.00px;height:13.40px;background:#f3f3f3;border-top:1.3px solid #dadada;border-bottom:1px solid #dcdcdc"></div>
<div class="a" style="left:216.00px;top:107.30px;width:14.00px;height:428.50px;background:#f3f3f3;border-right:1px solid #dcdcdc"></div>
<div class="a" style="left:229.30px;top:94.30px;width:1.00px;height:13.40px;background:#d4d4d4;"></div>
<svg style="left:216.00px;top:94.30px;" width="631" height="14" viewBox="0 0 631 14"><path d="M13.20 0 V13.4" stroke="#c8c8c8" stroke-width="0.9"/><path d="M18.01 10.2 V13.4" stroke="#d2d2d2" stroke-width="0.8"/><path d="M22.82 10.2 V13.4" stroke="#d2d2d2" stroke-width="0.8"/><path d="M27.63 10.2 V13.4" stroke="#d2d2d2" stroke-width="0.8"/><path d="M32.44 8 V13.4" stroke="#cdcdcd" stroke-width="0.8"/><path d="M37.24 10.2 V13.4" stroke="#d2d2d2" stroke-width="0.8"/><path d="M42.05 10.2 V13.4" stroke="#d2d2d2" stroke-width="0.8"/><path d="M46.86 10.2 V13.4" stroke="#d2d2d2" stroke-width="0.8"/><path d="M51.67 0 V13.4" stroke="#c8c8c8" stroke-width="0.9"/><path d="M56.48 10.2 V13.4" stroke="#d2d2d2" stroke-width="0.8"/><path d="M61.29 10.2 V13.4" stroke="#d2d2d2" stroke-width="0.8"/><path d="M66.10 10.2 V13.4" stroke="#d2d2d2" stroke-width="0.8"/><path d="M70.90 8 V13.4" stroke="#cdcdcd" stroke-width="0.8"/><path d="M75.71 10.2 V13.4" stroke="#d2d2d2" stroke-width="0.8"/><path d="M80.52 10.2 V13.4" stroke="#d2d2d2" stroke-width="0.8"/><path d="M85.33 10.2 V13.4" stroke="#d2d2d2" stroke-width="0.8"/><path d="M90.14 0 V13.4" stroke="#c8c8c8" stroke-width="0.9"/><path d="M94.95 10.2 V13.4" stroke="#d2d2d2" stroke-width="0.8"/><path d="M99.76 10.2 V13.4" stroke="#d2d2d2" stroke-width="0.8"/><path d="M104.57 10.2 V13.4" stroke="#d2d2d2" stroke-width="0.8"/><path d="M109.38 8 V13.4" stroke="#cdcdcd" stroke-width="0.8"/><path d="M114.18 10.2 V13.4" stroke="#d2d2d2" stroke-width="0.8"/><path d="M118.99 10.2 V13.4" stroke="#d2d2d2" stroke-width="0.8"/><path d="M123.80 10.2 V13.4" stroke="#d2d2d2" stroke-width="0.8"/><path d="M128.61 0 V13.4" stroke="#c8c8c8" stroke-width="0.9"/><path d="M133.42 10.2 V13.4" stroke="#d2d2d2" stroke-width="0.8"/><path d="M138.23 10.2 V13.4" stroke="#d2d2d2" stroke-width="0.8"/><path d="M143.04 10.2 V13.4" stroke="#d2d2d2" stroke-width="0.8"/><path d="M147.84 8 V13.4" stroke="#cdcdcd" stroke-width="0.8"/><path d="M152.65 10.2 V13.4" stroke="#d2d2d2" stroke-width="0.8"/><path d="M157.46 10.2 V13.4" stroke="#d2d2d2" stroke-width="0.8"/><path d="M162.27 10.2 V13.4" stroke="#d2d2d2" stroke-width="0.8"/><path d="M167.08 0 V13.4" stroke="#c8c8c8" stroke-width="0.9"/><path d="M171.89 10.2 V13.4" stroke="#d2d2d2" stroke-width="0.8"/><path d="M176.70 10.2 V13.4" stroke="#d2d2d2" stroke-width="0.8"/><path d="M181.51 10.2 V13.4" stroke="#d2d2d2" stroke-width="0.8"/><path d="M186.31 8 V13.4" stroke="#cdcdcd" stroke-width="0.8"/><path d="M191.12 10.2 V13.4" stroke="#d2d2d2" stroke-width="0.8"/><path d="M195.93 10.2 V13.4" stroke="#d2d2d2" stroke-width="0.8"/><path d="M200.74 10.2 V13.4" stroke="#d2d2d2" stroke-width="0.8"/><path d="M205.55 0 V13.4" stroke="#c8c8c8" stroke-width="0.9"/><path d="M210.36 10.2 V13.4" stroke="#d2d2d2" stroke-width="0.8"/><path d="M215.17 10.2 V13.4" stroke="#d2d2d2" stroke-width="0.8"/><path d="M219.98 10.2 V13.4" stroke="#d2d2d2" stroke-width="0.8"/><path d="M224.78 8 V13.4" stroke="#cdcdcd" stroke-width="0.8"/><path d="M229.59 10.2 V13.4" stroke="#d2d2d2" stroke-width="0.8"/><path d="M234.40 10.2 V13.4" stroke="#d2d2d2" stroke-width="0.8"/><path d="M239.21 10.2 V13.4" stroke="#d2d2d2" stroke-width="0.8"/><path d="M244.02 0 V13.4" stroke="#c8c8c8" stroke-width="0.9"/><path d="M248.83 10.2 V13.4" stroke="#d2d2d2" stroke-width="0.8"/><path d="M253.64 10.2 V13.4" stroke="#d2d2d2" stroke-width="0.8"/><path d="M258.45 10.2 V13.4" stroke="#d2d2d2" stroke-width="0.8"/><path d="M263.25 8 V13.4" stroke="#cdcdcd" stroke-width="0.8"/><path d="M268.06 10.2 V13.4" stroke="#d2d2d2" stroke-width="0.8"/><path d="M272.87 10.2 V13.4" stroke="#d2d2d2" stroke-width="0.8"/><path d="M277.68 10.2 V13.4" stroke="#d2d2d2" stroke-width="0.8"/><path d="M282.49 0 V13.4" stroke="#c8c8c8" stroke-width="0.9"/><path d="M287.30 10.2 V13.4" stroke="#d2d2d2" stroke-width="0.8"/><path d="M292.11 10.2 V13.4" stroke="#d2d2d2" stroke-width="0.8"/><path d="M296.92 10.2 V13.4" stroke="#d2d2d2" stroke-width="0.8"/><path d="M301.72 8 V13.4" stroke="#cdcdcd" stroke-width="0.8"/><path d="M306.53 10.2 V13.4" stroke="#d2d2d2" stroke-width="0.8"/><path d="M311.34 10.2 V13.4" stroke="#d2d2d2" stroke-width="0.8"/><path d="M316.15 10.2 V13.4" stroke="#d2d2d2" stroke-width="0.8"/><path d="M320.96 0 V13.4" stroke="#c8c8c8" stroke-width="0.9"/><path d="M325.77 10.2 V13.4" stroke="#d2d2d2" stroke-width="0.8"/><path d="M330.58 10.2 V13.4" stroke="#d2d2d2" stroke-width="0.8"/><path d="M335.39 10.2 V13.4" stroke="#d2d2d2" stroke-width="0.8"/><path d="M340.19 8 V13.4" stroke="#cdcdcd" stroke-width="0.8"/><path d="M345.00 10.2 V13.4" stroke="#d2d2d2" stroke-width="0.8"/><path d="M349.81 10.2 V13.4" stroke="#d2d2d2" stroke-width="0.8"/><path d="M354.62 10.2 V13.4" stroke="#d2d2d2" stroke-width="0.8"/><path d="M359.43 0 V13.4" stroke="#c8c8c8" stroke-width="0.9"/><path d="M364.24 10.2 V13.4" stroke="#d2d2d2" stroke-width="0.8"/><path d="M369.05 10.2 V13.4" stroke="#d2d2d2" stroke-width="0.8"/><path d="M373.86 10.2 V13.4" stroke="#d2d2d2" stroke-width="0.8"/><path d="M378.66 8 V13.4" stroke="#cdcdcd" stroke-width="0.8"/><path d="M383.47 10.2 V13.4" stroke="#d2d2d2" stroke-width="0.8"/><path d="M388.28 10.2 V13.4" stroke="#d2d2d2" stroke-width="0.8"/><path d="M393.09 10.2 V13.4" stroke="#d2d2d2" stroke-width="0.8"/><path d="M397.90 0 V13.4" stroke="#c8c8c8" stroke-width="0.9"/><path d="M402.71 10.2 V13.4" stroke="#d2d2d2" stroke-width="0.8"/><path d="M407.52 10.2 V13.4" stroke="#d2d2d2" stroke-width="0.8"/><path d="M412.33 10.2 V13.4" stroke="#d2d2d2" stroke-width="0.8"/><path d="M417.13 8 V13.4" stroke="#cdcdcd" stroke-width="0.8"/><path d="M421.94 10.2 V13.4" stroke="#d2d2d2" stroke-width="0.8"/><path d="M426.75 10.2 V13.4" stroke="#d2d2d2" stroke-width="0.8"/><path d="M431.56 10.2 V13.4" stroke="#d2d2d2" stroke-width="0.8"/><path d="M436.37 0 V13.4" stroke="#c8c8c8" stroke-width="0.9"/><path d="M441.18 10.2 V13.4" stroke="#d2d2d2" stroke-width="0.8"/><path d="M445.99 10.2 V13.4" stroke="#d2d2d2" stroke-width="0.8"/><path d="M450.80 10.2 V13.4" stroke="#d2d2d2" stroke-width="0.8"/><path d="M455.61 8 V13.4" stroke="#cdcdcd" stroke-width="0.8"/><path d="M460.41 10.2 V13.4" stroke="#d2d2d2" stroke-width="0.8"/><path d="M465.22 10.2 V13.4" stroke="#d2d2d2" stroke-width="0.8"/><path d="M470.03 10.2 V13.4" stroke="#d2d2d2" stroke-width="0.8"/><path d="M474.84 0 V13.4" stroke="#c8c8c8" stroke-width="0.9"/><path d="M479.65 10.2 V13.4" stroke="#d2d2d2" stroke-width="0.8"/><path d="M484.46 10.2 V13.4" stroke="#d2d2d2" stroke-width="0.8"/><path d="M489.27 10.2 V13.4" stroke="#d2d2d2" stroke-width="0.8"/><path d="M494.08 8 V13.4" stroke="#cdcdcd" stroke-width="0.8"/><path d="M498.88 10.2 V13.4" stroke="#d2d2d2" stroke-width="0.8"/><path d="M503.69 10.2 V13.4" stroke="#d2d2d2" stroke-width="0.8"/><path d="M508.50 10.2 V13.4" stroke="#d2d2d2" stroke-width="0.8"/><path d="M513.31 0 V13.4" stroke="#c8c8c8" stroke-width="0.9"/><path d="M518.12 10.2 V13.4" stroke="#d2d2d2" stroke-width="0.8"/><path d="M522.93 10.2 V13.4" stroke="#d2d2d2" stroke-width="0.8"/><path d="M527.74 10.2 V13.4" stroke="#d2d2d2" stroke-width="0.8"/><path d="M532.55 8 V13.4" stroke="#cdcdcd" stroke-width="0.8"/><path d="M537.35 10.2 V13.4" stroke="#d2d2d2" stroke-width="0.8"/><path d="M542.16 10.2 V13.4" stroke="#d2d2d2" stroke-width="0.8"/><path d="M546.97 10.2 V13.4" stroke="#d2d2d2" stroke-width="0.8"/><path d="M551.78 0 V13.4" stroke="#c8c8c8" stroke-width="0.9"/><path d="M556.59 10.2 V13.4" stroke="#d2d2d2" stroke-width="0.8"/><path d="M561.40 10.2 V13.4" stroke="#d2d2d2" stroke-width="0.8"/><path d="M566.21 10.2 V13.4" stroke="#d2d2d2" stroke-width="0.8"/><path d="M571.01 8 V13.4" stroke="#cdcdcd" stroke-width="0.8"/><path d="M575.82 10.2 V13.4" stroke="#d2d2d2" stroke-width="0.8"/><path d="M580.63 10.2 V13.4" stroke="#d2d2d2" stroke-width="0.8"/><path d="M585.44 10.2 V13.4" stroke="#d2d2d2" stroke-width="0.8"/><path d="M590.25 0 V13.4" stroke="#c8c8c8" stroke-width="0.9"/><path d="M595.06 10.2 V13.4" stroke="#d2d2d2" stroke-width="0.8"/><path d="M599.87 10.2 V13.4" stroke="#d2d2d2" stroke-width="0.8"/><path d="M604.68 10.2 V13.4" stroke="#d2d2d2" stroke-width="0.8"/><path d="M609.48 8 V13.4" stroke="#cdcdcd" stroke-width="0.8"/><path d="M614.29 10.2 V13.4" stroke="#d2d2d2" stroke-width="0.8"/><path d="M619.10 10.2 V13.4" stroke="#d2d2d2" stroke-width="0.8"/><path d="M623.91 10.2 V13.4" stroke="#d2d2d2" stroke-width="0.8"/><path d="M628.72 0 V13.4" stroke="#c8c8c8" stroke-width="0.9"/></svg>
<div class="t" style="left:231.10px;top:96.57px;font-size:6.6px;color:#666;">0</div>
<div class="t" style="left:269.57px;top:96.57px;font-size:6.6px;color:#666;">1</div>
<div class="t" style="left:308.04px;top:96.57px;font-size:6.6px;color:#666;">2</div>
<div class="t" style="left:346.51px;top:96.57px;font-size:6.6px;color:#666;">3</div>
<div class="t" style="left:384.98px;top:96.57px;font-size:6.6px;color:#666;">4</div>
<div class="t" style="left:423.45px;top:96.57px;font-size:6.6px;color:#666;">5</div>
<div class="t" style="left:461.92px;top:96.57px;font-size:6.6px;color:#666;">6</div>
<div class="t" style="left:500.39px;top:96.57px;font-size:6.6px;color:#666;">7</div>
<div class="t" style="left:538.86px;top:96.57px;font-size:6.6px;color:#666;">8</div>
<div class="t" style="left:577.33px;top:96.57px;font-size:6.6px;color:#666;">9</div>
<div class="t" style="left:615.80px;top:96.57px;font-size:6.6px;color:#666;">10</div>
<div class="t" style="left:654.27px;top:96.57px;font-size:6.6px;color:#666;">11</div>
<div class="t" style="left:692.74px;top:96.57px;font-size:6.6px;color:#666;">12</div>
<div class="t" style="left:731.21px;top:96.57px;font-size:6.6px;color:#666;">13</div>
<div class="t" style="left:769.68px;top:96.57px;font-size:6.6px;color:#666;">14</div>
<div class="t" style="left:808.15px;top:96.57px;font-size:6.6px;color:#666;">15</div>
<svg style="left:216.00px;top:107.30px;" width="14" height="428.5" viewBox="0 0 14 428.5"><path d="M0 -0.30 H14" stroke="#c8c8c8" stroke-width="0.9"/><path d="M10.2 4.51 H14" stroke="#d2d2d2" stroke-width="0.8"/><path d="M10.2 9.32 H14" stroke="#d2d2d2" stroke-width="0.8"/><path d="M10.2 14.13 H14" stroke="#d2d2d2" stroke-width="0.8"/><path d="M8 18.94 H14" stroke="#cdcdcd" stroke-width="0.8"/><path d="M10.2 23.74 H14" stroke="#d2d2d2" stroke-width="0.8"/><path d="M10.2 28.55 H14" stroke="#d2d2d2" stroke-width="0.8"/><path d="M10.2 33.36 H14" stroke="#d2d2d2" stroke-width="0.8"/><path d="M0 38.17 H14" stroke="#c8c8c8" stroke-width="0.9"/><path d="M10.2 42.98 H14" stroke="#d2d2d2" stroke-width="0.8"/><path d="M10.2 47.79 H14" stroke="#d2d2d2" stroke-width="0.8"/><path d="M10.2 52.60 H14" stroke="#d2d2d2" stroke-width="0.8"/><path d="M8 57.40 H14" stroke="#cdcdcd" stroke-width="0.8"/><path d="M10.2 62.21 H14" stroke="#d2d2d2" stroke-width="0.8"/><path d="M10.2 67.02 H14" stroke="#d2d2d2" stroke-width="0.8"/><path d="M10.2 71.83 H14" stroke="#d2d2d2" stroke-width="0.8"/><path d="M0 76.64 H14" stroke="#c8c8c8" stroke-width="0.9"/><path d="M10.2 81.45 H14" stroke="#d2d2d2" stroke-width="0.8"/><path d="M10.2 86.26 H14" stroke="#d2d2d2" stroke-width="0.8"/><path d="M10.2 91.07 H14" stroke="#d2d2d2" stroke-width="0.8"/><path d="M8 95.88 H14" stroke="#cdcdcd" stroke-width="0.8"/><path d="M10.2 100.68 H14" stroke="#d2d2d2" stroke-width="0.8"/><path d="M10.2 105.49 H14" stroke="#d2d2d2" stroke-width="0.8"/><path d="M10.2 110.30 H14" stroke="#d2d2d2" stroke-width="0.8"/><path d="M0 115.11 H14" stroke="#c8c8c8" stroke-width="0.9"/><path d="M10.2 119.92 H14" stroke="#d2d2d2" stroke-width="0.8"/><path d="M10.2 124.73 H14" stroke="#d2d2d2" stroke-width="0.8"/><path d="M10.2 129.54 H14" stroke="#d2d2d2" stroke-width="0.8"/><path d="M8 134.34 H14" stroke="#cdcdcd" stroke-width="0.8"/><path d="M10.2 139.15 H14" stroke="#d2d2d2" stroke-width="0.8"/><path d="M10.2 143.96 H14" stroke="#d2d2d2" stroke-width="0.8"/><path d="M10.2 148.77 H14" stroke="#d2d2d2" stroke-width="0.8"/><path d="M0 153.58 H14" stroke="#c8c8c8" stroke-width="0.9"/><path d="M10.2 158.39 H14" stroke="#d2d2d2" stroke-width="0.8"/><path d="M10.2 163.20 H14" stroke="#d2d2d2" stroke-width="0.8"/><path d="M10.2 168.01 H14" stroke="#d2d2d2" stroke-width="0.8"/><path d="M8 172.81 H14" stroke="#cdcdcd" stroke-width="0.8"/><path d="M10.2 177.62 H14" stroke="#d2d2d2" stroke-width="0.8"/><path d="M10.2 182.43 H14" stroke="#d2d2d2" stroke-width="0.8"/><path d="M10.2 187.24 H14" stroke="#d2d2d2" stroke-width="0.8"/><path d="M0 192.05 H14" stroke="#c8c8c8" stroke-width="0.9"/><path d="M10.2 196.86 H14" stroke="#d2d2d2" stroke-width="0.8"/><path d="M10.2 201.67 H14" stroke="#d2d2d2" stroke-width="0.8"/><path d="M10.2 206.48 H14" stroke="#d2d2d2" stroke-width="0.8"/><path d="M8 211.28 H14" stroke="#cdcdcd" stroke-width="0.8"/><path d="M10.2 216.09 H14" stroke="#d2d2d2" stroke-width="0.8"/><path d="M10.2 220.90 H14" stroke="#d2d2d2" stroke-width="0.8"/><path d="M10.2 225.71 H14" stroke="#d2d2d2" stroke-width="0.8"/><path d="M0 230.52 H14" stroke="#c8c8c8" stroke-width="0.9"/><path d="M10.2 235.33 H14" stroke="#d2d2d2" stroke-width="0.8"/><path d="M10.2 240.14 H14" stroke="#d2d2d2" stroke-width="0.8"/><path d="M10.2 244.95 H14" stroke="#d2d2d2" stroke-width="0.8"/><path d="M8 249.75 H14" stroke="#cdcdcd" stroke-width="0.8"/><path d="M10.2 254.56 H14" stroke="#d2d2d2" stroke-width="0.8"/><path d="M10.2 259.37 H14" stroke="#d2d2d2" stroke-width="0.8"/><path d="M10.2 264.18 H14" stroke="#d2d2d2" stroke-width="0.8"/><path d="M0 268.99 H14" stroke="#c8c8c8" stroke-width="0.9"/><path d="M10.2 273.80 H14" stroke="#d2d2d2" stroke-width="0.8"/><path d="M10.2 278.61 H14" stroke="#d2d2d2" stroke-width="0.8"/><path d="M10.2 283.42 H14" stroke="#d2d2d2" stroke-width="0.8"/><path d="M8 288.22 H14" stroke="#cdcdcd" stroke-width="0.8"/><path d="M10.2 293.03 H14" stroke="#d2d2d2" stroke-width="0.8"/><path d="M10.2 297.84 H14" stroke="#d2d2d2" stroke-width="0.8"/><path d="M10.2 302.65 H14" stroke="#d2d2d2" stroke-width="0.8"/><path d="M0 307.46 H14" stroke="#c8c8c8" stroke-width="0.9"/><path d="M10.2 312.27 H14" stroke="#d2d2d2" stroke-width="0.8"/><path d="M10.2 317.08 H14" stroke="#d2d2d2" stroke-width="0.8"/><path d="M10.2 321.89 H14" stroke="#d2d2d2" stroke-width="0.8"/><path d="M8 326.69 H14" stroke="#cdcdcd" stroke-width="0.8"/><path d="M10.2 331.50 H14" stroke="#d2d2d2" stroke-width="0.8"/><path d="M10.2 336.31 H14" stroke="#d2d2d2" stroke-width="0.8"/><path d="M10.2 341.12 H14" stroke="#d2d2d2" stroke-width="0.8"/><path d="M0 345.93 H14" stroke="#c8c8c8" stroke-width="0.9"/><path d="M10.2 350.74 H14" stroke="#d2d2d2" stroke-width="0.8"/><path d="M10.2 355.55 H14" stroke="#d2d2d2" stroke-width="0.8"/><path d="M10.2 360.36 H14" stroke="#d2d2d2" stroke-width="0.8"/><path d="M8 365.16 H14" stroke="#cdcdcd" stroke-width="0.8"/><path d="M10.2 369.97 H14" stroke="#d2d2d2" stroke-width="0.8"/><path d="M10.2 374.78 H14" stroke="#d2d2d2" stroke-width="0.8"/><path d="M10.2 379.59 H14" stroke="#d2d2d2" stroke-width="0.8"/><path d="M0 384.40 H14" stroke="#c8c8c8" stroke-width="0.9"/><path d="M10.2 389.21 H14" stroke="#d2d2d2" stroke-width="0.8"/><path d="M10.2 394.02 H14" stroke="#d2d2d2" stroke-width="0.8"/><path d="M10.2 398.83 H14" stroke="#d2d2d2" stroke-width="0.8"/><path d="M8 403.63 H14" stroke="#cdcdcd" stroke-width="0.8"/><path d="M10.2 408.44 H14" stroke="#d2d2d2" stroke-width="0.8"/><path d="M10.2 413.25 H14" stroke="#d2d2d2" stroke-width="0.8"/><path d="M10.2 418.06 H14" stroke="#d2d2d2" stroke-width="0.8"/><path d="M0 422.87 H14" stroke="#c8c8c8" stroke-width="0.9"/><path d="M10.2 427.68 H14" stroke="#d2d2d2" stroke-width="0.8"/></svg>
<div class="t" style="left:217.2px;top:112.27px;font-size:6.6px;color:#666;transform-origin:0 0;transform:rotate(-90deg)">0</div>
<div class="t" style="left:217.2px;top:150.74px;font-size:6.6px;color:#666;transform-origin:0 0;transform:rotate(-90deg)">1</div>
<div class="t" style="left:217.2px;top:189.21px;font-size:6.6px;color:#666;transform-origin:0 0;transform:rotate(-90deg)">2</div>
<div class="t" style="left:217.2px;top:227.68px;font-size:6.6px;color:#666;transform-origin:0 0;transform:rotate(-90deg)">3</div>
<div class="t" style="left:217.2px;top:266.15px;font-size:6.6px;color:#666;transform-origin:0 0;transform:rotate(-90deg)">4</div>
<div class="t" style="left:217.2px;top:304.62px;font-size:6.6px;color:#666;transform-origin:0 0;transform:rotate(-90deg)">5</div>
<div class="t" style="left:217.2px;top:343.09px;font-size:6.6px;color:#666;transform-origin:0 0;transform:rotate(-90deg)">6</div>
<div class="t" style="left:217.2px;top:381.56px;font-size:6.6px;color:#666;transform-origin:0 0;transform:rotate(-90deg)">7</div>
<div class="t" style="left:217.2px;top:420.03px;font-size:6.6px;color:#666;transform-origin:0 0;transform:rotate(-90deg)">8</div>
<div class="t" style="left:217.2px;top:458.50px;font-size:6.6px;color:#666;transform-origin:0 0;transform:rotate(-90deg)">9</div>
<div class="t" style="left:217.2px;top:500.64px;font-size:6.6px;color:#666;transform-origin:0 0;transform:rotate(-90deg)">10</div>
<div class="a" style="left:215.40px;top:282.50px;width:6.30px;height:48.00px;background:#fff;border-radius:0 3px 3px 0;box-shadow:0.5px 0 1px rgba(0,0,0,0.12)"></div>
<svg style="left:216.50px;top:302.00px;" width="5" height="6" viewBox="0 0 5 6"><path d="M3.8 0.8 L1.3 3 L3.8 5.2" fill="none" stroke="#444" stroke-width="0.9"/></svg>
<div class="a" style="left:848.00px;top:97.00px;width:5.00px;height:446.00px;background:#fafafa;"></div>
<div class="a" style="left:849.00px;top:97.00px;width:3.50px;height:16.00px;background:#c6c6c6;border-radius:2px"></div>
<div class="a" style="left:216.00px;top:536.00px;width:632.00px;height:7.00px;background:#fafafa;"></div>
<div class="a" style="left:218.40px;top:538.00px;width:37.60px;height:3.60px;background:#c6c6c6;border-radius:2px"></div>
<div class="a" style="left:233.50px;top:512.50px;width:63.80px;height:17.50px;background:#ececec;border-radius:9px"></div>
<svg style="left:237.00px;top:516.00px;" width="11" height="11" viewBox="0 0 11 11"><circle cx="5.3" cy="5.3" r="4.6" fill="none" stroke="#c4c4c4" stroke-width="1"/><path d="M3 5.3 H7.6" stroke="#c4c4c4" stroke-width="1"/></svg>
<div class="t" style="left:251.60px;top:515.79px;font-size:10.6px;color:#c6c6c6;font-weight:bold;">100%</div>
<svg style="left:283.00px;top:516.00px;" width="11" height="11" viewBox="0 0 11 11"><circle cx="5.3" cy="5.3" r="4.6" fill="none" stroke="#c4c4c4" stroke-width="1"/><path d="M3 5.3 H7.6 M5.3 3 V7.6" stroke="#c4c4c4" stroke-width="1"/></svg>
<svg style="left:240.00px;top:115.00px;" width="430" height="345" viewBox="0 0 430 345"><path d="M86.50 35.00 L70.80 123.50 C69.42 124.03 66.48 125.12 62.50 126.70 C58.52 128.28 52.11 130.28 46.90 133.00 C41.69 135.72 35.94 139.23 31.25 143.00 C26.56 146.77 22.04 151.67 18.75 155.60 C15.46 159.53 13.09 163.47 11.50 166.60 C9.91 169.73 9.37 171.83 9.20 174.40 C9.03 176.97 9.53 179.82 10.50 182.00 C11.47 184.18 12.85 185.95 15.00 187.50 C17.15 189.05 19.90 191.30 23.40 191.30 C26.90 191.30 31.57 189.88 36.00 187.50 C40.43 185.12 45.07 180.58 50.00 177.00 C54.93 173.42 60.43 169.25 65.60 166.00 C70.77 162.75 75.27 159.87 81.00 157.50 C86.73 155.13 92.78 152.72 100.00 151.80 C107.22 150.88 116.20 150.35 124.30 152.00 C132.40 153.65 140.50 156.63 148.60 161.70 C156.70 166.77 165.62 174.70 172.90 182.40 C180.18 190.10 187.03 199.60 192.30 207.90 C197.57 216.20 201.62 224.92 204.50 232.20 C207.38 239.48 208.58 246.33 209.60 251.60 C210.62 256.87 210.43 261.77 210.60 263.80 L272.90 263.50 C273.13 260.90 273.48 253.10 274.30 247.90 C275.12 242.70 276.07 237.22 277.80 232.30 C279.53 227.38 281.82 223.03 284.70 218.40 C287.58 213.77 291.33 208.55 295.10 204.50 C298.87 200.45 303.25 196.98 307.30 194.10 C311.35 191.22 314.25 189.38 319.40 187.20 C324.55 185.02 332.02 182.33 338.20 181.00 C344.38 179.67 350.42 179.20 356.50 179.20 C362.58 179.20 369.55 179.98 374.70 181.00 C379.85 182.02 385.28 184.58 387.40 185.30 C387.60 184.18 387.68 180.53 388.60 178.60 C389.52 176.67 391.37 175.32 392.90 173.70 C394.43 172.08 396.78 170.82 397.80 168.90 C398.82 166.98 399.22 164.43 399.00 162.20 C398.78 159.97 397.92 157.42 396.50 155.50 C395.08 153.58 393.12 151.92 390.50 150.70 C387.88 149.48 386.42 149.02 380.75 148.20 C375.08 147.38 366.62 146.70 356.50 145.80 C346.38 144.90 327.75 143.38 320.00 142.80 C312.25 142.22 311.67 142.38 310.00 142.30 L310.00 67.00 C309.50 65.67 308.62 60.88 307.00 59.00 C305.38 57.12 301.42 56.25 300.30 55.70 C300.13 54.88 299.30 53.23 299.30 50.80 C299.30 48.37 299.45 43.87 300.30 41.10 C301.15 38.33 302.32 36.17 304.40 34.20 C306.48 32.23 310.48 30.70 312.80 29.30 C315.12 27.90 316.93 27.30 318.30 25.80 C319.67 24.30 320.77 21.92 321.00 20.30 C321.23 18.68 320.83 17.48 319.70 16.10 C318.57 14.72 316.52 12.58 314.20 12.00 C311.88 11.42 308.83 11.57 305.80 12.60 C302.77 13.63 299.00 15.53 296.00 18.20 C293.00 20.87 289.98 24.55 287.80 28.60 C285.62 32.65 283.87 37.98 282.90 42.50 C281.93 47.02 282.15 53.50 282.00 55.70 C280.67 56.25 275.93 57.12 274.00 59.00 C272.07 60.88 271.00 65.67 270.40 67.00 L270.40 141.50 L240.00 141.50 L218.90 35.00 Z" fill="#ed1c24" stroke="#7a2020" stroke-width="0.7" stroke-linejoin="round"/><rect x="66.5" y="14.900000000000006" width="170.10000000000002" height="30.2" rx="15.1" fill="#ed1c24" stroke="#7a2020" stroke-width="0.7"/><path d="M105.00 46.00 L200.10 46.00 L221.70 142.00 L184.80 141.40 C181.58 139.77 173.13 135.13 165.50 131.60 C157.87 128.07 147.80 122.63 139.00 120.20 C130.20 117.77 121.18 117.30 112.70 117.00 C104.22 116.70 92.20 118.17 88.10 118.40 Z" fill="#a7a9ac" stroke="#7a2020" stroke-width="0.6"/><circle cx="112" cy="249" r="80.4" fill="#000"/><circle cx="112.10000000000002" cy="249.5" r="36.5" fill="#a7a9ac"/><circle cx="352.79999999999995" cy="259" r="59.8" fill="#000"/><circle cx="353.20000000000005" cy="260" r="22" fill="#a7a9ac"/><path d="M197.2 170.2 H224 M210.60000000000002 156.89999999999998 V183.60000000000002" stroke="#d8a8aa" stroke-width="0.8"/></svg>
<div class="a" style="left:247.30px;top:125.50px;width:406.60px;height:319.00px;background:transparent;border:1.2px solid #8a8a8a"></div>
<div class="a" style="left:244.80px;top:123.10px;width:6.20px;height:6.20px;background:#fff;border:1px solid #8a8a8a"></div>
<div class="a" style="left:650.30px;top:123.10px;width:6.20px;height:6.20px;background:#fff;border:1px solid #8a8a8a"></div>
<div class="a" style="left:244.80px;top:440.80px;width:6.20px;height:6.20px;background:#fff;border:1px solid #8a8a8a"></div>
<div class="a" style="left:650.30px;top:440.80px;width:6.20px;height:6.20px;background:#fff;border:1px solid #8a8a8a"></div>
<div class="a" style="left:417.00px;top:448.30px;width:66.20px;height:11.20px;background:#2b2b2b;border-radius:2.5px"></div>
<div class="t" style="left:423.40px;top:450.57px;font-size:6.6px;color:#f2f2f2;font-weight:bold;letter-spacing:-0.1px">10.53&nbsp; in x 8.25&nbsp; in</div>
<div class="a" style="left:856.40px;top:69.00px;width:1.00px;height:474.00px;background:#e6e6e6;"></div>
<div class="t" style="left:865.60px;top:77.59px;font-size:7.9px;color:#2a7a5c;-webkit-text-stroke:0.25px #2a7a5c">Layers</div>
<div class="t" style="left:906.00px;top:77.59px;font-size:7.9px;color:#444;">Material Colors</div>
<div class="a" style="left:857.00px;top:92.10px;width:40.00px;height:1.70px;background:#2a8664;"></div>
<div class="a" style="left:857.00px;top:93.80px;width:167.00px;height:0.80px;background:#ececec;"></div>
<svg style="left:866.50px;top:101.20px;" width="11" height="11" viewBox="0 0 11 11"><rect x="1.3" y="1.3" width="5" height="5" fill="none" stroke="#444" stroke-width="1"/><rect x="4.6" y="4.6" width="5" height="5" fill="none" stroke="#444" stroke-width="1"/><circle cx="1.3" cy="1.3" r="1" fill="#444"/><circle cx="6.3" cy="1.3" r="1" fill="#444"/><circle cx="1.3" cy="6.3" r="1" fill="#444"/><circle cx="9.6" cy="4.6" r="1" fill="#444"/><circle cx="4.6" cy="9.6" r="1" fill="#444"/><circle cx="9.6" cy="9.6" r="1" fill="#444"/></svg>
<svg style="left:888.00px;top:101.00px;" width="12" height="12" viewBox="0 0 12 12"><path d="M2.8 8.8 H1.3 V1.3 H8.8 V2.8" fill="none" stroke="#444" stroke-width="1"/><rect x="3.5" y="3.5" width="7.2" height="7.2" rx="0.5" fill="none" stroke="#444" stroke-width="1"/><path d="M7.1 5.3 V9 M5.3 7.1 H8.9" stroke="#444" stroke-width="0.9"/></svg>
<svg style="left:909.30px;top:101.00px;" width="11" height="12" viewBox="0 0 11 12"><path d="M1 2.8 H10 M3.8 2.8 V1.3 H7.2 V2.8" fill="none" stroke="#444" stroke-width="1"/><path d="M2 2.8 L2.6 10.5 H8.4 L9 2.8" fill="none" stroke="#444" stroke-width="1"/><path d="M4.5 4.8 V8.5 M6.5 4.8 V8.5" stroke="#444" stroke-width="0.8"/></svg>
<div class="a" style="left:857.00px;top:120.00px;width:167.00px;height:0.80px;background:#ececec;"></div>
<div class="a" style="left:1015.50px;top:121.00px;width:1.00px;height:342.00px;background:#ededed;"></div>
<div class="a" style="left:859.30px;top:122.30px;width:154.70px;height:29.20px;background:#b6eddc;border-radius:2px"></div>
<svg style="left:865.50px;top:132.50px;" width="5" height="7" viewBox="0 0 5 7"><path d="M1 0.8 L3.8 3.5 L1 6.2" fill="none" stroke="#333" stroke-width="1"/></svg>
<svg style="left:877.80px;top:130.80px;" width="10.5" height="10.5" viewBox="0 0 10.5 10.5"><path d="M0.7 3 V0.7 H3 M7.5 0.7 H9.8 V3 M9.8 7.5 V9.8 H7.5 M3 9.8 H0.7 V7.5" fill="none" stroke="#333" stroke-width="0.9"/><rect x="2.6" y="2.6" width="3.6" height="3.6" fill="none" stroke="#333" stroke-width="0.9"/><circle cx="6" cy="6" r="2" fill="#b6eddc" stroke="#333" stroke-width="0.9"/></svg>
<div class="t" style="left:893.80px;top:132.58px;font-size:7.35px;color:#2c3a34;font-weight:bold;">AH Tractor applique SVG</div>
<div class="a" style="left:857.00px;top:463.00px;width:159.00px;height:0.80px;background:#ececec;"></div>
<div class="a" style="left:865.00px;top:471.00px;width:11.00px;height:10.60px;background:#fff;border:1px solid #e0e0e0;border-radius:1px"></div>
<div class="t" style="left:880.00px;top:473.91px;font-size:6.9px;color:#444;letter-spacing:-0.05px">Background Color</div>
<div class="a" style="left:857.00px;top:488.80px;width:167.00px;height:0.80px;background:#eeeeee;"></div>
<svg style="left:871.50px;top:493.50px;" width="11" height="11" viewBox="0 0 11 11"><rect x="1" y="1" width="6.5" height="6.5" fill="none" stroke="#e0e0e0" stroke-width="0.9"/><rect x="3.5" y="3.5" width="6.5" height="6.5" fill="none" stroke="#e0e0e0" stroke-width="0.9"/></svg>
<div class="t" style="left:826.50px;width:100px;text-align:center;top:507.78px;font-size:5.8px;color:#e0e0e0;">Slice</div>
<svg style="left:898.50px;top:493.00px;" width="18" height="12" viewBox="0 0 18 12"><rect x="1" y="1" width="6" height="6" fill="none" stroke="#444" stroke-width="0.9"/><circle cx="6.8" cy="7" r="3.6" fill="none" stroke="#444" stroke-width="0.9"/><path d="M12.3 4 H15.3 L13.8 5.8 Z" fill="#444"/></svg>
<div class="t" style="left:857.00px;width:100px;text-align:center;top:507.78px;font-size:5.8px;color:#444;">Combine</div>
<svg style="left:931.50px;top:494.50px;" width="12" height="9" viewBox="0 0 12 9"><rect x="0.8" y="1" width="10.4" height="5.8" rx="2.9" fill="none" stroke="#444" stroke-width="1"/><rect x="3" y="3" width="6" height="1.8" rx="0.9" fill="none" stroke="#444" stroke-width="0.8"/></svg>
<div class="t" style="left:887.50px;width:100px;text-align:center;top:507.78px;font-size:5.8px;color:#444;">Attach</div>
<svg style="left:962.50px;top:493.00px;" width="11" height="12" viewBox="0 0 11 12"><path d="M1 6 L5.5 8.5 L10 6 M1 8.5 L5.5 11 L10 8.5" fill="none" stroke="#444" stroke-width="0.9"/><path d="M5.5 0.5 V5 M3.8 3.5 L5.5 5.2 L7.2 3.5" fill="none" stroke="#444" stroke-width="0.9"/><path d="M2.6 5 L1 6 M8.4 5 L10 6" stroke="#444" stroke-width="0.9"/></svg>
<div class="t" style="left:917.50px;width:100px;text-align:center;top:507.78px;font-size:5.8px;color:#444;">Flatten</div>
<svg style="left:992.00px;top:492.50px;" width="13" height="13" viewBox="0 0 13 13"><circle cx="6.5" cy="6.5" r="5.3" fill="none" stroke="#e0e0e0" stroke-width="0.9" stroke-dasharray="1.6 1.2"/></svg>
<div class="t" style="left:948.50px;width:100px;text-align:center;top:507.78px;font-size:5.8px;color:#e2e2e2;">Contour</div>
<div class="a" style="left:857.00px;top:515.00px;width:167.00px;height:27.50px;background:#feecdb;"></div>
<svg style="left:865.50px;top:525.30px;" width="10" height="10" viewBox="0 0 10 10"><defs><linearGradient id="lf" x1="0" y1="0" x2="0" y2="1"><stop offset="0" stop-color="#c8401c"/><stop offset="1" stop-color="#f0a030"/></linearGradient></defs><path d="M5 0.3 L6 2.8 L8 1.8 L7.4 4.2 L9.7 4.6 L7.6 6.6 L8.3 7.8 L5.4 7.4 L5.3 9.7 H4.7 L4.6 7.4 L1.7 7.8 L2.4 6.6 L0.3 4.6 L2.6 4.2 L2 1.8 L4 2.8 Z" fill="url(#lf)"/></svg>
<div class="t" style="left:877.60px;top:526.39px;font-size:8.1px;color:#2c2c2c;letter-spacing:-0.12px">Fall decor projects, this way!</div>
<svg style="left:1014.00px;top:527.00px;" width="5" height="5" viewBox="0 0 5 5"><path d="M0.5 0.5 L4.5 4.5 M4.5 0.5 L0.5 4.5" stroke="#f0d6c0" stroke-width="0.8"/></svg>
<svg style="left:1019.50px;top:537.50px;" width="4.5" height="5" viewBox="0 0 4.5 5"><path d="M4.5 0 V5 H0 Z" fill="#333"/></svg>
</div></body></html>
